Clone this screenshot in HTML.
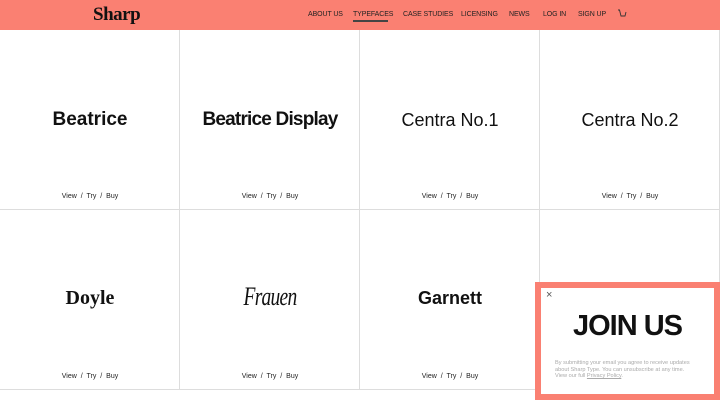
<!DOCTYPE html>
<html><head><meta charset="utf-8"><style>
*{margin:0;padding:0;box-sizing:border-box}
body{width:720px;height:400px;overflow:hidden;background:#fff;font-family:"Liberation Sans",sans-serif;position:relative}
.hdr{position:absolute;left:0;top:0;width:720px;height:30px;background:#fa8072}
.logo{position:absolute;left:93px;top:4px;font-family:"Liberation Serif",serif;font-weight:bold;font-size:19px;color:#111;letter-spacing:-0.5px}
.nav{position:absolute;top:11px;font-size:7px;color:#222;letter-spacing:-0.1px}
.ul{position:absolute;left:353px;top:20px;width:35px;height:1.5px;background:#444}
.cell{position:absolute;width:180px;height:180px;border-right:1px solid #ddd;border-bottom:1px solid #ddd}
.t{position:absolute;left:0;width:180px;text-align:center;color:#111}
.v{position:absolute;left:0;width:180px;top:163px;text-align:center;font-size:7px;color:#222;word-spacing:2px}
.pop{position:absolute;left:535px;top:282px;width:185px;height:118px;background:#fa8072;padding:6px}
.in{background:#fff;width:173px;height:106px;position:relative}
</style></head><body>
<div class="hdr">
<div class="logo">Sharp</div>
<span class="nav" style="left:308px">ABOUT US</span>
<span class="nav" style="left:353px">TYPEFACES</span>
<span class="nav" style="left:403px">CASE STUDIES</span>
<span class="nav" style="left:461px">LICENSING</span>
<span class="nav" style="left:509px">NEWS</span>
<span class="nav" style="left:543px">LOG IN</span>
<span class="nav" style="left:578px">SIGN UP</span>
<svg style="position:absolute;left:617px;top:9px" width="10" height="10" viewBox="0 0 10 10"><path d="M1 1h1.5l1.5 6h4l1-4" fill="none" stroke="#333" stroke-width="0.9"/></svg>
<div class="ul"></div>
</div>
<div class="cell" style="left:0;top:30px"><div class="t" style="top:79px;font-size:19px;font-weight:bold">Beatrice</div><div class="v">View / Try / Buy</div></div>
<div class="cell" style="left:180px;top:30px"><div class="t" style="top:79px;font-size:19px;font-weight:bold;letter-spacing:-0.8px">Beatrice Display</div><div class="v">View / Try / Buy</div></div>
<div class="cell" style="left:360px;top:30px"><div class="t" style="top:80px;font-size:18px">Centra No.1</div><div class="v">View / Try / Buy</div></div>
<div class="cell" style="left:540px;top:30px"><div class="t" style="top:80px;font-size:18px">Centra No.2</div><div class="v">View / Try / Buy</div></div>
<div class="cell" style="left:0;top:210px"><div class="t" style="top:77px;font-size:20px;font-weight:bold;font-family:'Liberation Serif',serif">Doyle</div><div class="v">View / Try / Buy</div></div>
<div class="cell" style="left:180px;top:210px"><div class="t" style="top:72px;font-size:26px;font-family:'Liberation Serif',serif;font-style:italic;letter-spacing:-1px;transform:scaleX(0.75)">Frauen</div><div class="v">View / Try / Buy</div></div>
<div class="cell" style="left:360px;top:210px"><div class="t" style="top:78px;font-size:18px;font-weight:bold">Garnett</div><div class="v">View / Try / Buy</div></div>
<div class="cell" style="left:540px;top:210px"></div>
<div class="pop"><div class="in">
<div style="position:absolute;left:5px;top:1px;font-size:11px;color:#555">×</div>
<div style="position:absolute;left:0;width:173px;top:22px;text-align:center;font-size:29px;font-weight:bold;letter-spacing:-1px;color:#111">JOIN US</div>
<div style="position:absolute;left:14px;top:72px;font-size:5.6px;line-height:6.6px;color:#aaa">By submitting your email you agree to receive updates<br>about Sharp Type. You can unsubscribe at any time.<br>View our full <u>Privacy Policy</u>.</div>
</div></div>
</body></html>
